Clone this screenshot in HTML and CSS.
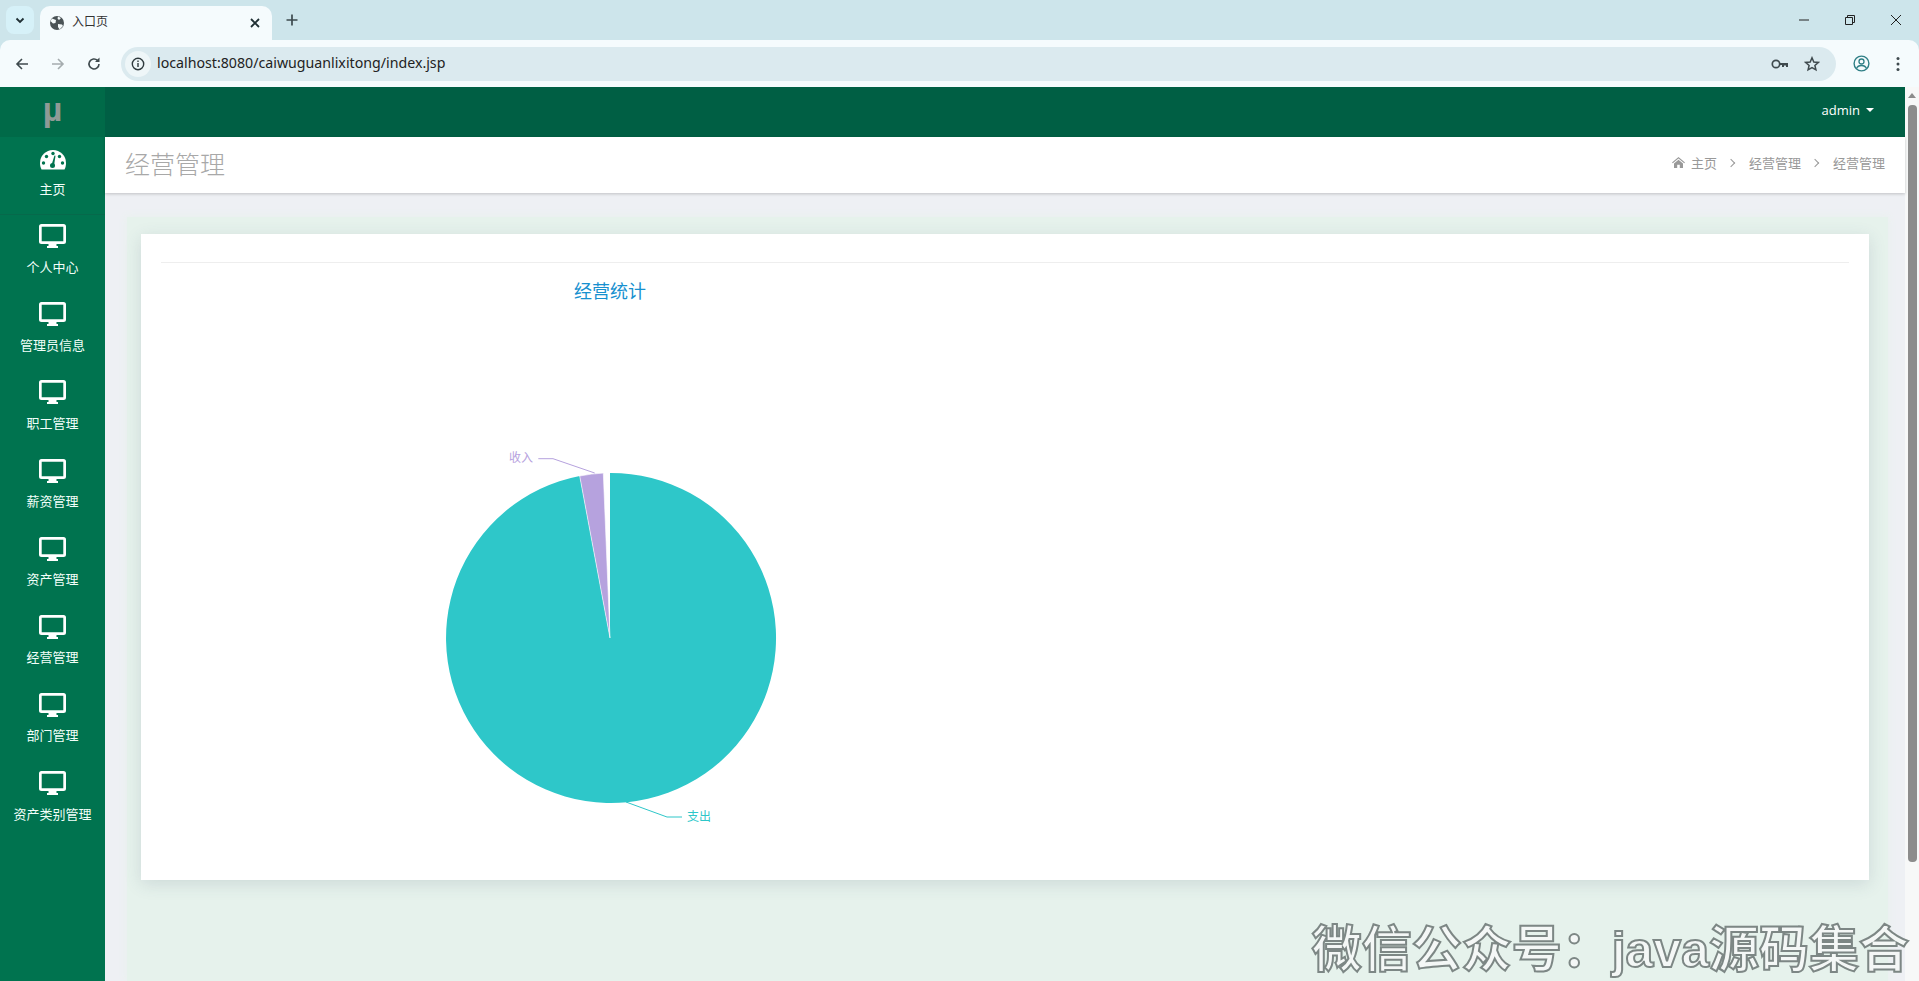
FILE: index.html
```html
<!DOCTYPE html>
<html>
<head>
    <title>入口页</title>
    <link rel="stylesheet" href="styles.css">
</head>
<body>
    <div class="browser-tabs">
        <div class="tab-search"><svg width="12" height="12" viewBox="0 0 12 12"><path d="M2.500 4.500 6 8l3.500-3.500" fill="none" stroke="#1f2f33" stroke-width="1.800"/></svg></div>
        <div class="tab">
            <svg width="16" height="16" viewBox="0 0 16 16"><circle cx="8" cy="8" r="7" fill="#4a5356"/><path d="M3 3.500 7 5 6.500 8 4 8.500 1.500 6ZM9 1.500 12 3 10 5 8.500 3.500ZM9 9l4 .5 1 1.500-3.500 3.500L9 12Z" fill="#f4fafb"/></svg>
            <span class="tab-title">入口页</span>
            <svg width="12" height="12" viewBox="0 0 12 12"><path d="M2 2l8 8M10 2l-8 8" stroke="#1f2f33" stroke-width="1.800"/></svg>
        </div>
        <div class="tab-new"><svg width="14" height="14" viewBox="0 0 14 14"><path d="M7 1.500v11M1.500 7h11" stroke="#3c4a4e" stroke-width="1.700"/></svg></div>
        <div class="win-btns">
            <svg width="12" height="12" viewBox="0 0 12 12"><path d="M1 6h10" stroke="#222" stroke-width="1"/></svg>
            <svg width="12" height="12" viewBox="0 0 12 12"><path d="M1.500 3.500h7v7h-7zM3.500 3.500v-2h7v7h-2" fill="none" stroke="#222" stroke-width="1"/></svg>
            <svg width="12" height="12" viewBox="0 0 12 12"><path d="M1 1l10 10M11 1 1 11" stroke="#222" stroke-width="1"/></svg>
        </div>
    </div>
    <div class="browser-bar">
        <div class="nav-btns">
            <svg width="16" height="16" viewBox="0 0 16 16"><path d="M14 8H3M8 3 3 8l5 5" fill="none" stroke="#3f4a4e" stroke-width="1.600"/></svg>
            <svg width="16" height="16" viewBox="0 0 16 16"><path d="M2 8h11M8 3l5 5-5 5" fill="none" stroke="#a5acaf" stroke-width="1.600"/></svg>
            <svg width="16" height="16" viewBox="0 0 16 16"><path d="M13 8a5 5 0 1 1-1.500-3.600" fill="none" stroke="#3f4a4e" stroke-width="1.600"/><path d="M13.500 1.500v4.500H9z" fill="#3f4a4e"/></svg>
        </div>
        <div class="url-box">
            <div class="url-info"><svg width="14" height="14" viewBox="0 0 14 14"><circle cx="7" cy="7" r="5.700" fill="none" stroke="#2f3a3e" stroke-width="1.400"/><path d="M7 6v4M7 3.600v1.400" stroke="#2f3a3e" stroke-width="1.400"/></svg></div>
            <span class="url-text">localhost:8080/caiwuguanlixitong/index.jsp</span>
            <div class="url-icons">
                <svg width="18" height="12" viewBox="0 0 18 12"><circle cx="5" cy="6" r="3.700" fill="none" stroke="#3f4a4e" stroke-width="1.700"/><path d="M8.500 5H17v4h-2V7.500h-2V9h-2V7H8.500z" fill="#3f4a4e"/></svg>
                <svg width="16" height="16" viewBox="0 0 16 16"><path d="M8 1.800 9.800 6l4.500.4-3.400 3 1 4.400L8 11.500l-3.900 2.300 1-4.400-3.400-3L6.200 6z" fill="none" stroke="#3f4a4e" stroke-width="1.500"/></svg>
            </div>
        </div>
        <div class="bar-end">
            <svg width="17" height="17" viewBox="0 0 17 17"><circle cx="8.500" cy="8.500" r="7.400" fill="none" stroke="#2f7f86" stroke-width="1.400"/><circle cx="8.500" cy="6.500" r="2.500" fill="none" stroke="#2f7f86" stroke-width="1.300"/><path d="M3.500 13.500c1-2.500 3-3 5-3s4 .5 5 3" fill="none" stroke="#2f7f86" stroke-width="1.300"/></svg>
            <svg width="4" height="16" viewBox="0 0 4 16"><circle cx="2" cy="2.500" r="1.500" fill="#3f4a4e"/><circle cx="2" cy="8" r="1.500" fill="#3f4a4e"/><circle cx="2" cy="13.500" r="1.500" fill="#3f4a4e"/></svg>
        </div>
    </div>
    <div class="app">
        <div class="sidebar">
            <div class="logo">µ</div>
            <div class="menu-item first">
                <svg class="gauge" width="26" height="20" viewBox="0 0 26 20"><path d="M13 0a13 13 0 0 1 13 13c0 2.500-.5 4.500-1.500 6.500h-23C.5 17.500 0 15.500 0 13A13 13 0 0 1 13 0Z" fill="#fff"/><g fill="#00734f"><circle cx="13" cy="3.500" r="1.700"/><circle cx="6.500" cy="6.500" r="1.700"/><circle cx="19.500" cy="6.500" r="1.700"/><circle cx="3.500" cy="13" r="1.700"/><circle cx="22.500" cy="13" r="1.700"/><circle cx="12.500" cy="15.500" r="2.500"/><path d="M11.500 15 14.500 5.500l1 .3-1.500 10z"/></g></svg>
                <span>主页</span>
            </div>
            <div class="menu-item">
                <svg class="monitor" width="27" height="24" viewBox="0 0 27 24"><use href="#mon"/></svg>
                <span>个人中心</span>
            </div>
            <div class="menu-item">
                <svg class="monitor" width="27" height="24" viewBox="0 0 27 24"><use href="#mon"/></svg>
                <span>管理员信息</span>
            </div>
            <div class="menu-item">
                <svg class="monitor" width="27" height="24" viewBox="0 0 27 24"><use href="#mon"/></svg>
                <span>职工管理</span>
            </div>
            <div class="menu-item">
                <svg class="monitor" width="27" height="24" viewBox="0 0 27 24"><use href="#mon"/></svg>
                <span>薪资管理</span>
            </div>
            <div class="menu-item">
                <svg class="monitor" width="27" height="24" viewBox="0 0 27 24"><use href="#mon"/></svg>
                <span>资产管理</span>
            </div>
            <div class="menu-item">
                <svg class="monitor" width="27" height="24" viewBox="0 0 27 24"><use href="#mon"/></svg>
                <span>经营管理</span>
            </div>
            <div class="menu-item">
                <svg class="monitor" width="27" height="24" viewBox="0 0 27 24"><use href="#mon"/></svg>
                <span>部门管理</span>
            </div>
            <div class="menu-item">
                <svg class="monitor" width="27" height="24" viewBox="0 0 27 24"><use href="#mon"/></svg>
                <span>资产类别管理</span>
            </div>
        </div>
        <div class="main">
            <div class="topbar">admin <i class="caret"></i></div>
            <div class="page-head">
                <h1>经营管理</h1>
                <div class="crumbs">
                    <svg width="13" height="11" viewBox="0 0 13 11"><path d="M6.500 0 13 5.500l-.8.8-5.700-4.700L.8 6.300 0 5.500zM2 6.500l4.500-3.700L11 6.500V11H7.800V7.800H5.200V11H2z" fill="#999"/></svg>
                    <span class="crumb-home">主页</span><b></b><span>经营管理</span><b></b><span>经营管理</span>
                </div>
            </div>
            <div class="content">
                <div class="panel">
                    <div class="card">
                        <div class="card-rule"></div>
                        <svg class="pie" width="900" height="600" viewBox="0 0 900 600">
                            <text class="pie-title" x="470" y="34" text-anchor="middle">经营统计</text>
                            <path d="M470 374 L470 209 A165 165 0 1 1 439.700 212 Z" fill="#2ec7c9"/>
                            <path d="M470 374 L439.700 212 A165 165 0 0 1 463.300 209.100 Z" fill="#b6a2de" stroke="#fff" stroke-width="0.600"/>
                            <polyline points="454.700,209 413,194.700 398.300,194.700" fill="none" stroke="#b6a2de"/>
                            <text class="pie-label" x="393" y="198" text-anchor="end" fill="#b6a2de">收入</text>
                            <polyline points="486,538 527,553 542,553" fill="none" stroke="#2ec7c9"/>
                            <text class="pie-label" x="547" y="557" fill="#2ec7c9">支出</text>
                        </svg>
                    </div>
                </div>
            </div>
        </div>
        <div class="scrollbar"><i class="arrow"></i><i class="thumb"></i></div>
        <div class="watermark">微信公众号：java源码集合</div>
    </div>
    <svg class="defs" width="0" height="0"><defs><g id="mon"><path d="M2.500 0h22A2.500 2.500 0 0 1 27 2.500v15a2.500 2.500 0 0 1-2.500 2.500h-22A2.500 2.500 0 0 1 0 17.500v-15A2.500 2.500 0 0 1 2.500 0ZM2.700 2.700v14.600h21.600V2.700Z" fill="#fff" fill-rule="evenodd"/><path d="M9.500 20h8v2h1.500v2H8v-2h1.500z" fill="#fff"/></g></defs></svg>
</body>
</html>
```

FILE: styles.css
```css
* { box-sizing: border-box; }
html, body { margin: 0; padding: 0; height: 981px; overflow: hidden; }
body { font-family: "Open Sans", "Noto Sans CJK SC", sans-serif; background: #cde5eb; color: #333; }
i { font-style: normal; display: block; }

.defs { position: absolute; }

/* browser */
.browser-tabs { height: 40px; background: #cde5eb; display: flex; align-items: flex-end; padding-left: 6px; }
.tab-search { width: 28px; height: 28px; margin-bottom: 6px; border-radius: 8px; background: #d6f1f8; display: flex; align-items: center; justify-content: center; }
.tab { width: 232px; height: 34px; margin-left: 6px; background: #f5fbfd; border-radius: 10px 10px 0 0; display: flex; align-items: center; padding: 0 11px 0 9px; }
.tab-title { flex: 1; margin-left: 7px; padding-bottom: 4px; font-size: 12px; color: #333; }
.tab-new { width: 28px; height: 28px; margin: 0 0 6px 6px; display: flex; align-items: center; justify-content: center; }
.win-btns { margin-left: auto; height: 40px; display: flex; align-items: center; gap: 34px; padding-right: 17px; }
.browser-bar { height: 47px; background: #f5fbfd; border-radius: 10px 10px 0 0; display: flex; align-items: center; padding-left: 14px; }
.nav-btns { display: flex; gap: 20px; width: 105px; }
.url-box { width: 1715px; height: 34px; margin-left: 2px; border-radius: 17px; background: #dbeaef; display: flex; align-items: center; padding-left: 4px; padding-right: 16px; }
.url-info { width: 26px; height: 26px; border-radius: 13px; background: #eef6f8; display: flex; align-items: center; justify-content: center; }
.url-text { margin-left: 6px; padding-bottom: 2px; font-family: "Noto Sans", sans-serif; font-size: 14.2px; color: #222; flex: 1; }
.url-icons { display: flex; align-items: center; gap: 15px; }
.bar-end { display: flex; align-items: center; gap: 26px; margin-left: 17px; }

/* page */
.app { height: 894px; display: flex; position: relative; background: #fff; }
.sidebar { width: 105px; background: #00734f; flex-shrink: 0; }
.logo { height: 50px; background: #006a48; color: #8f9a96; font-family: "Liberation Sans", sans-serif; font-size: 34px; font-weight: bold; text-align: center; line-height: 44px; }
.menu-item { height: 78.15px; display: flex; flex-direction: column; align-items: center; color: #f2fffa; font-size: 13px; padding-top: 9px; }
.menu-item.first { border-bottom: 1px solid #06694b; }
.menu-item .gauge { margin: 4px 0 9px; }
.menu-item .monitor { margin-bottom: 8.500px; }
.menu-item span { line-height: 20px; white-space: nowrap; }
.main { flex: 1; min-width: 0; display: flex; flex-direction: column; }
.topbar { height: 50px; background: #005f44; color: #fff; font-size: 13px; display: flex; align-items: center; justify-content: flex-end; gap: 6px; padding: 0 31px 5px 0; }
.caret { width: 0; height: 0; border-left: 4px solid transparent; border-right: 4px solid transparent; border-top: 4px solid #fff; }
.page-head { height: 56px; background: #fff; display: flex; align-items: center; justify-content: space-between; padding: 0 20px 5px 20px; box-shadow: 0 1px 3px rgba(0,0,0,0.2); position: relative; }
.page-head h1 { margin: 0; font-size: 25px; font-weight: 300; color: #a8a8a8; }
.crumbs { display: flex; align-items: center; font-size: 13px; color: #999; }
.crumb-home { margin-left: 6px; }
.crumbs b { width: 6px; height: 6px; margin: 0 15px 0 11px; border-top: 1px solid #999; border-right: 1px solid #999; transform: rotate(45deg); }
.content { flex: 1; background: #eef0f4; padding: 24px 17px 0 22px; }
.panel { height: 100%; background: #e6f2ec; box-shadow: 0 0 8px 1px #e9f1ee; padding: 17px 19px 0 14px; }
.card { height: 646px; background: #fff; box-shadow: 0 4px 16px rgba(60,80,110,0.15); padding: 28px 20px 0 20px; }
.card-rule { height: 1px; background: #eee; }
.pie { display: block; margin: 1px 0 0 -21px; }
.pie-title { font-size: 18px; fill: #1790cf; }
.pie-label { font-size: 12px; }
.watermark { position: absolute; right: 10px; bottom: 1px; font-family: "Liberation Sans", "Noto Sans CJK SC", sans-serif; font-size: 50px; line-height: 60px; font-weight: bold; color: #f4f7f6; -webkit-text-stroke: 2px #7d8785; white-space: nowrap; }
.scrollbar { width: 14px; background: #f7f8f8; flex-shrink: 0; }
.arrow { width: 0; height: 0; margin: 6px auto 0; border-left: 4px solid transparent; border-right: 4px solid transparent; border-bottom: 5px solid #8c8c8c; }
.thumb { width: 9px; height: 757px; margin: 7px auto 0; border-radius: 4px; background: #8c8c8c; }
```
